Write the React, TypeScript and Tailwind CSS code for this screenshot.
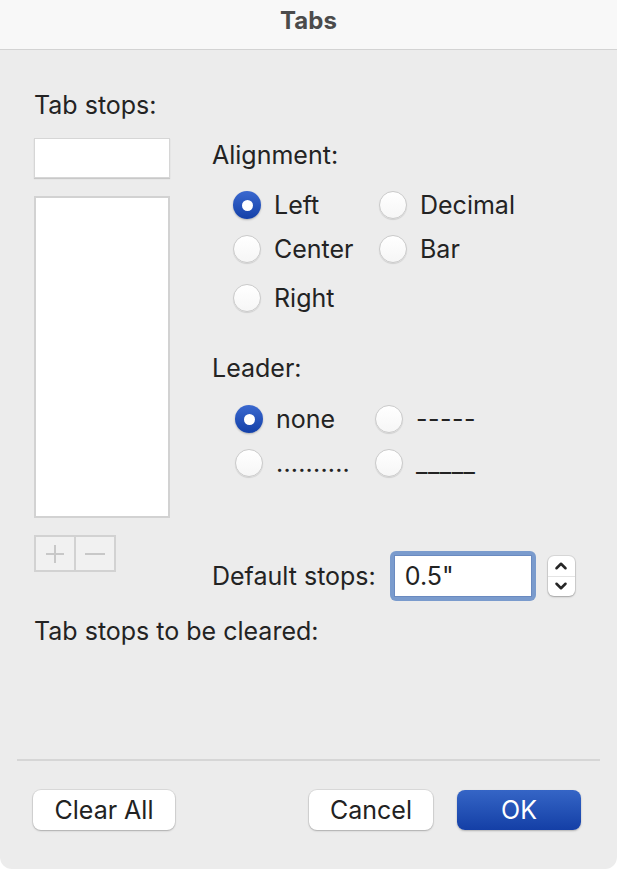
import { ChevronDown, ChevronUp } from "lucide-react";

function Radio({ checked, label, labelClass }: { checked?: boolean; label: string; labelClass?: string }) {
    return (
        <div className="flex h-[28px] items-center gap-[13px]">
            {checked ? (
                <span className="flex h-[28px] w-[28px] items-center justify-center rounded-full bg-gradient-to-b from-[#3a68cf] to-[#1340a8] shadow-[0_1px_2px_rgba(0,0,0,0.25)]">
                    <span className="h-[11px] w-[11px] rounded-full bg-white" />
                </span>
            ) : (
                <span className="h-[28px] w-[28px] rounded-full border border-[#cacaca] bg-gradient-to-b from-white to-[#f6f6f6] shadow-[0_1px_1px_rgba(0,0,0,0.12)]" />
            )}
            <span className={"whitespace-pre " + (labelClass ?? "")}>{label}</span>
        </div>
    );
}

function Button({ children, primary, className }: { children: string; primary?: boolean; className?: string }) {
    return (
        <button
            className={
                "h-[40px] rounded-[8px] text-[25px] leading-[30px] " +
                (primary
                    ? "bg-gradient-to-b from-[#3565c6] to-[#143fa6] text-white shadow-[0_1px_2px_rgba(0,0,0,0.25)] "
                    : "bg-white text-[#222] shadow-[0_0_0_1px_rgba(0,0,0,0.07),0_1px_2px_rgba(0,0,0,0.22)] ") +
                (className ?? "")
            }
        >
            {children}
        </button>
    );
}

export default function App() {
    return (
        <div className="h-[869px] w-[617px] overflow-hidden rounded-b-[12px] bg-[#ececec] font-[Inter,sans-serif] text-[25px] leading-[30px] text-[#232323]">
            {/* title bar */}
            <div className="flex h-[50px] items-center justify-center border-b border-[#d3d3d3] bg-[#f8f8f8] pb-[8px]">
                <span className="text-[24px] font-bold text-[#4b4b4b]">Tabs</span>
            </div>

            <div className="flex pl-[34px] pt-[40px]">
                {/* tab stop list */}
                <div className="flex w-[136px] flex-col">
                    <span>Tab stops:</span>
                    <div className="mt-[18px] h-[40px] border border-[#d6d6d6] bg-white shadow-[0_1px_1px_rgba(0,0,0,0.15)]" />
                    <div className="mt-[18px] h-[322px] border-2 border-[#d2d2d2] bg-white" />
                    <div className="mt-[17px] flex h-[37px] w-[82px] border-2 border-[#d2d2d2] bg-[#f1f1f1]">
                        <span className="flex flex-1 items-center justify-center border-r-2 border-[#d2d2d2]">
                            <svg width="22" height="22" viewBox="0 0 22 22">
                                <path d="M11 2v18M2 11h18" stroke="#c8c8c8" strokeWidth="2" />
                            </svg>
                        </span>
                        <span className="flex flex-1 items-center justify-center">
                            <svg width="22" height="22" viewBox="0 0 22 22">
                                <path d="M1 11h20" stroke="#c8c8c8" strokeWidth="2" />
                            </svg>
                        </span>
                    </div>
                </div>

                {/* alignment / leader */}
                <div className="ml-[42px] flex flex-col pt-[50px]">
                    <span>Alignment:</span>
                    <div className="mt-[21px] grid grid-cols-[146px_auto] gap-y-[16px] pl-[21px]">
                        <Radio checked label="Left" />
                        <Radio label="Decimal" />
                        <Radio label="Center" />
                        <Radio label="Bar" />
                    </div>
                    <div className="mt-[21px] pl-[21px]">
                        <Radio label="Right" />
                    </div>

                    <span className="mt-[41px]">Leader:</span>
                    <div className="mt-[22px] grid grid-cols-[140px_auto] gap-y-[16px] pl-[23px]">
                        <Radio checked label="none" />
                        <Radio label="-----" labelClass="tracking-[0.5px]" />
                        <Radio label=".........." labelClass="tracking-[0.2px]" />
                        <Radio label="_____" labelClass="tracking-[0.5px]" />
                    </div>

                    <div className="mt-[74px] flex items-center">
                        <span>Default stops:</span>
                        <div className="ml-[14px] flex h-[50px] w-[146px] rounded-[6px] bg-[#7a9bcd] p-[4px]">
                            <div className="flex flex-1 items-center border border-[#6a8ac0] bg-white pl-[10px]">
                                0.5"
                            </div>
                        </div>
                        <div className="ml-[12px] flex h-[40px] w-[27px] flex-col rounded-[6px] bg-white shadow-[0_0_0_1px_rgba(0,0,0,0.08),0_1px_2px_rgba(0,0,0,0.25)]">
                            <span className="flex flex-1 items-center justify-center border-b border-[#e4e4e4]">
                                <ChevronUp size={18} strokeWidth={3.4} color="#262626" />
                            </span>
                            <span className="flex flex-1 items-center justify-center">
                                <ChevronDown size={18} strokeWidth={3.4} color="#262626" />
                            </span>
                        </div>
                    </div>
                </div>
            </div>

            <div className="mt-[15px] pl-[34px]">Tab stops to be cleared:</div>

            <div className="mx-[17px] mt-[113px] h-[2px] bg-[#d6d6d6]" />

            <div className="mt-[29px] flex pl-[33px] pr-[36px]">
                <Button className="w-[142px]">Clear All</Button>
                <div className="flex-1" />
                <Button className="w-[124px]">Cancel</Button>
                <Button primary className="ml-[24px] w-[124px]">
                    OK
                </Button>
            </div>
        </div>
    );
}
